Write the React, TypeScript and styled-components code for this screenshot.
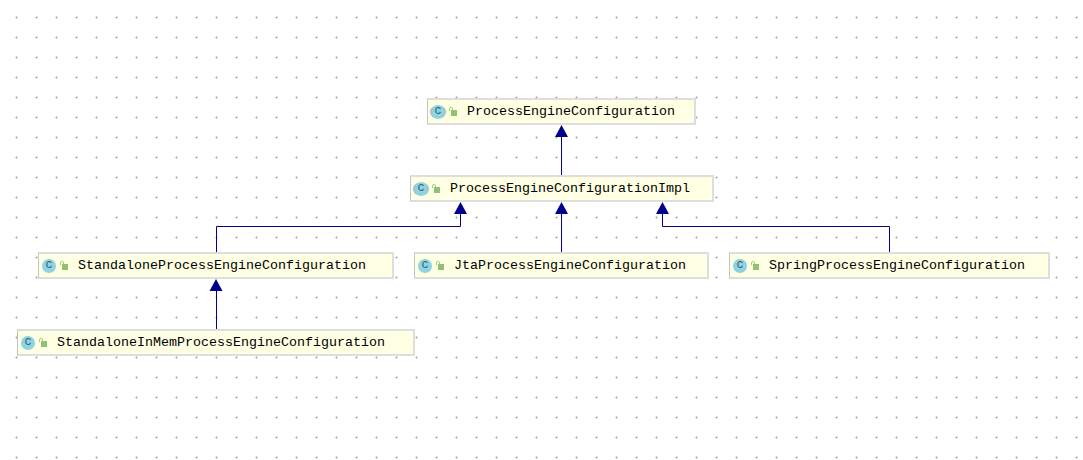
import React from "react";
import styled, { createGlobalStyle } from "styled-components";

const GlobalStyle = createGlobalStyle`
  html, body {
    margin: 0;
    padding: 0;
    background: #ffffff;
  }
`;

type NodeInfo = { name: string; left: number; top: number; width: number; abstract?: boolean };

const nodes: NodeInfo[] = [
  { name: "ProcessEngineConfiguration", left: 427, top: 98, width: 269, abstract: true },
  { name: "ProcessEngineConfigurationImpl", left: 410, top: 175, width: 304, abstract: true },
  { name: "StandaloneProcessEngineConfiguration", left: 38, top: 252, width: 356 },
  { name: "JtaProcessEngineConfiguration", left: 414, top: 252, width: 295 },
  { name: "SpringProcessEngineConfiguration", left: 729, top: 252, width: 321 },
  { name: "StandaloneInMemProcessEngineConfiguration", left: 17, top: 329, width: 398 },
];

const arrowHeads = [
  "555,137 568,137 561.5,125",
  "454,214 467,214 460.5,202",
  "555,214 568,214 561.5,202",
  "656,214 669,214 662.5,202",
  "209.5,291 222.5,291 216,279",
];

export default function App() {
  return (
    <>
      <GlobalStyle />
      <Canvas>
        <Edges width="1083" height="460">
          <polyline points="561.5,137 561.5,175" />
          <polyline points="216.5,252 216.5,226.5 460.5,226.5 460.5,214" />
          <polyline points="561.5,252 561.5,214" />
          <polyline points="889.5,252 889.5,226.5 662.5,226.5 662.5,214" />
          <polyline points="216.5,329 216.5,291" />
          {arrowHeads.map((p) => (
            <polygon key={p} points={p} />
          ))}
        </Edges>
        {nodes.map((n) => (
          <ClassNode key={n.name} $left={n.left} $top={n.top} $width={n.width}>
            <ClassBadge $abstract={n.abstract}>c</ClassBadge>
            <LockIcon width="8" height="9" viewBox="0 0 8 9">
              <rect x="2" y="3" width="6" height="6" fill="#8fc36f" />
              <path d="M0.5 4 V1.5 Q0.5 0.5 2 0.5 Q3.5 0.5 3.5 1.5 V3" fill="none" stroke="#9ccb80" strokeWidth="1" />
            </LockIcon>
            <ClassName>{n.name}</ClassName>
          </ClassNode>
        ))}
      </Canvas>
    </>
  );
}

const Canvas = styled.div`
  position: relative;
  width: 1083px;
  height: 460px;
  overflow: hidden;
  background-color: #ffffff;
  background-image: radial-gradient(
    circle at 16.5px 17.5px,
    #a8a8a8 0,
    #cfcfcf 1px,
    #ffffff 1.4px
  );
  background-size: 20px 20px;
  background-repeat: repeat;
`;

const Edges = styled.svg`
  position: absolute;
  left: 0;
  top: 0;

  polyline {
    fill: none;
    stroke: #00008b;
    stroke-width: 1;
  }

  polygon {
    fill: #00008b;
  }
`;

const ClassNode = styled.div<{ $left: number; $top: number; $width: number }>`
  position: absolute;
  left: ${(p) => p.$left}px;
  top: ${(p) => p.$top}px;
  width: ${(p) => p.$width}px;
  height: 27px;
  box-sizing: border-box;
  display: flex;
  align-items: center;
  padding-left: 3px;
  background: #ffffe4;
  border: 2px solid #dedede;
  border-left: 1px solid #c4c4c4;
`;

const ClassBadge = styled.span<{ $abstract?: boolean }>`
  width: 14px;
  height: 14px;
  flex: none;
  border-radius: 50%;
  background: #8ad4e4;
  color: #4a5a66;
  font: 12px/13px "Liberation Mono", monospace;
  text-align: center;
  box-shadow: ${(p) => (p.$abstract ? "-2px 0 0 -1px #b4b4b4, 2px 0 0 -1px #b4b4b4" : "none")};
`;

const LockIcon = styled.svg`
  flex: none;
  margin-left: 4px;
  margin-bottom: 1px;
`;

const ClassName = styled.span`
  margin-left: 10px;
  font: 13.33px "Liberation Mono", "Courier New", monospace;
  color: #000000;
  white-space: pre;
`;
